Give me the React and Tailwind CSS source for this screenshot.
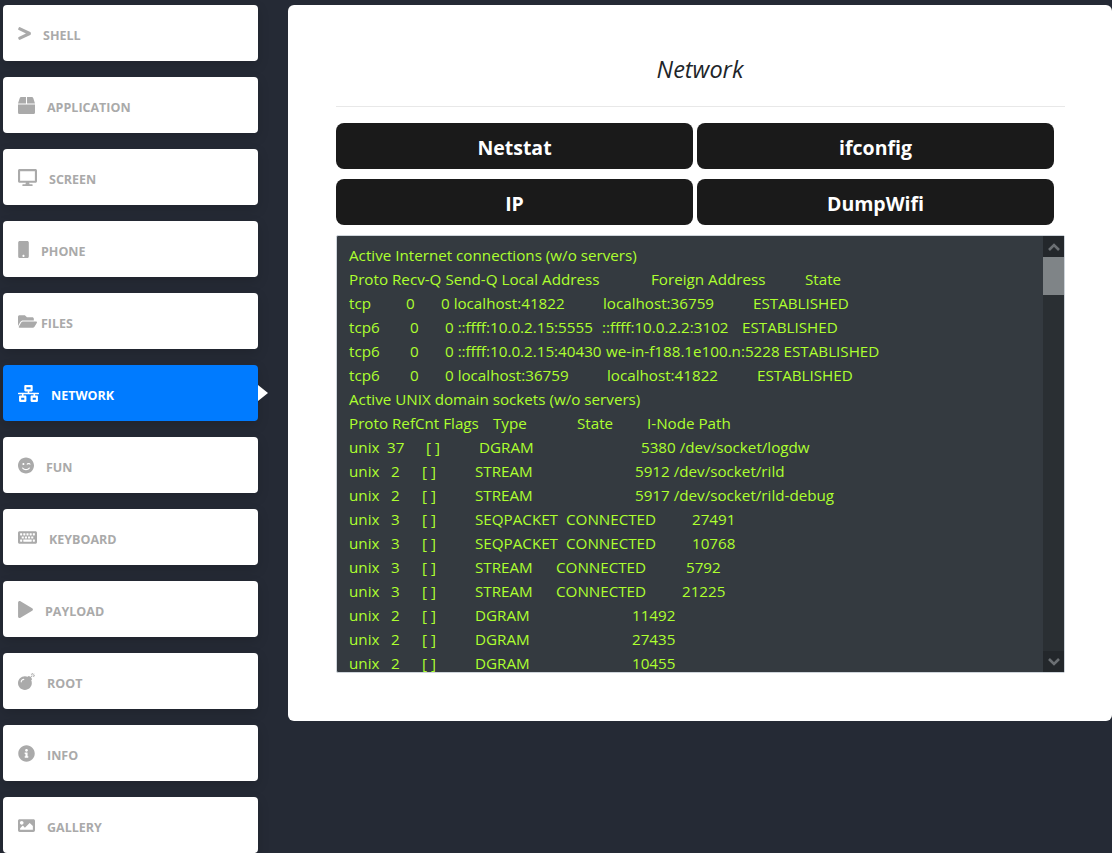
import React from 'react';
import {
  FaGreaterThan, FaBox, FaDesktop, FaMobile, FaFolderOpen, FaNetworkWired,
  FaSmileWink, FaKeyboard, FaPlay, FaBomb, FaInfoCircle, FaImage,
} from 'react-icons/fa';

const menu = [
  { label: 'Shell', icon: FaGreaterThan, width: 'w-[13px]!' },
  { label: 'Application', icon: FaBox, width: 'w-[17px]!' },
  { label: 'Screen', icon: FaDesktop, width: 'w-[19px]!' },
  { label: 'Phone', icon: FaMobile, width: 'w-[11px]!' },
  { label: 'Files', icon: FaFolderOpen, width: 'w-[19px]!', tight: true },
  { label: 'Network', icon: FaNetworkWired, width: 'w-[21px]!', active: true },
  { label: 'Fun', icon: FaSmileWink, width: 'w-[16px]!' },
  { label: 'Keyboard', icon: FaKeyboard, width: 'w-[19px]!' },
  { label: 'Payload', icon: FaPlay, width: 'w-[15px]!' },
  { label: 'Root', icon: FaBomb, width: 'w-[17px]!' },
  { label: 'Info', icon: FaInfoCircle, width: 'w-[17px]!' },
  { label: 'Gallery', icon: FaImage, width: 'w-[17px]!' },
];

// each token is [text, x offset inside the line], netstat output has no real columns here
const output = [
  [['Active Internet connections (w/o servers)', 0]],
  [['Proto Recv-Q Send-Q Local Address', 0], ['Foreign Address', 302], ['State', 456]],
  [['tcp', 0], ['0', 57], ['0 localhost:41822', 92], ['localhost:36759', 254], ['ESTABLISHED', 404]],
  [['tcp6', 0], ['0', 61], ['0 ::ffff:10.0.2.15:5555', 96], ['::ffff:10.0.2.2:3102', 253], ['ESTABLISHED', 393]],
  [['tcp6', 0], ['0', 61], ['0 ::ffff:10.0.2.15:40430', 96], ['we-in-f188.1e100.n:5228 ESTABLISHED', 257]],
  [['tcp6', 0], ['0', 61], ['0 localhost:36759', 96], ['localhost:41822', 258], ['ESTABLISHED', 408]],
  [['Active UNIX domain sockets (w/o servers)', 0]],
  [['Proto RefCnt Flags', 0], ['Type', 144], ['State', 228], ['I-Node Path', 298]],
  [['unix', 0], ['37', 38], ['[ ]', 77], ['DGRAM', 130], ['5380 /dev/socket/logdw', 292]],
  [['unix', 0], ['2', 42], ['[ ]', 73], ['STREAM', 126], ['5912 /dev/socket/rild', 286]],
  [['unix', 0], ['2', 42], ['[ ]', 73], ['STREAM', 126], ['5917 /dev/socket/rild-debug', 286]],
  [['unix', 0], ['3', 42], ['[ ]', 73], ['SEQPACKET', 126], ['CONNECTED', 217], ['27491', 343]],
  [['unix', 0], ['3', 42], ['[ ]', 73], ['SEQPACKET', 126], ['CONNECTED', 217], ['10768', 343]],
  [['unix', 0], ['3', 42], ['[ ]', 73], ['STREAM', 126], ['CONNECTED', 207], ['5792', 337]],
  [['unix', 0], ['3', 42], ['[ ]', 73], ['STREAM', 126], ['CONNECTED', 207], ['21225', 333]],
  [['unix', 0], ['2', 42], ['[ ]', 73], ['DGRAM', 126], ['11492', 283]],
  [['unix', 0], ['2', 42], ['[ ]', 73], ['DGRAM', 126], ['27435', 283]],
  [['unix', 0], ['2', 42], ['[ ]', 73], ['DGRAM', 126], ['10455', 283]],
];

const OutputLine = ({ tokens }) => (
  <div className="h-6 leading-6 whitespace-pre">
    {tokens.map(([text, x], i) => {
      const next = tokens[i + 1];
      return (
        <span key={i} className="inline-block" style={next ? { width: next[1] - x } : undefined}>
          {text}
        </span>
      );
    })}
  </div>
);

const MenuItem = ({ label, icon: Icon, width, tight, active }) => (
  <div
    className={`relative flex h-14 w-[255px] shrink-0 items-center rounded-[4px] pl-[15px] shadow-[0_4px_12px_rgba(0,0,0,0.15)] ${
      active ? 'bg-[#007bff] text-white' : 'bg-white text-[#aaaaaa]'
    }`}
  >
    <Icon className={`h-[17px]! shrink-0 ${width} ${tight ? 'mr-1' : 'mr-3'}`} />
    <span className="mt-[6px] text-[12.5px] font-bold uppercase">{label}</span>
    {active && (
      <span className="absolute top-[20px] left-full border-y-[8px] border-l-[10px] border-y-transparent border-l-white" />
    )}
  </div>
);

const Chevron = ({ d }) => (
  <svg viewBox="0 0 12 8" className="h-2 w-3" fill="none" stroke="#6b6f73" strokeWidth="2.6">
    <path d={d} />
  </svg>
);

export default function App() {
  return (
    <div className="flex h-[853px] items-start gap-[30px] overflow-hidden bg-[#252a35] pt-[5px] pl-[3px] font-['Open_Sans',sans-serif]">
      <div className="flex w-[255px] shrink-0 flex-col gap-4">
        {menu.map((item) => (
          <MenuItem key={item.label} {...item} />
        ))}
      </div>

      <div className="h-[716px] w-[824px] shrink-0 rounded-[6px] bg-white px-12">
        <h1 className="pt-[48px] pb-[20px] text-center text-[23.5px] leading-[33px] text-[#212529] italic">Network</h1>
        <hr className="w-[729px] border-[#e8e8e8]" />
        <div className="mt-4 flex flex-wrap gap-x-1 gap-y-[10px]">
          {['Netstat', 'ifconfig', 'IP', 'DumpWifi'].map((name) => (
            <button key={name} className="h-[46px] w-[357px] rounded-lg bg-[#1a1a1a] pt-1 text-[19.5px] font-bold text-white">
              {name}
            </button>
          ))}
        </div>
        <div className="mt-[10px] flex h-[438px] w-[729px] overflow-hidden rounded-[2px] border border-[#ced4da] bg-[#343a40]">
          <div className="min-w-0 flex-1 overflow-hidden pt-[7px] pl-3 text-[15.2px] text-[#adff2f]">
            {output.map((tokens, i) => (
              <OutputLine key={i} tokens={tokens} />
            ))}
          </div>
          <div className="flex w-[21px] shrink-0 flex-col bg-[#2a2f33]">
            <div className="flex h-[21px] items-center justify-center bg-[#23272b]">
              <Chevron d="M1 7l5-5 5 5" />
            </div>
            <div className="h-[38px] bg-[#7f8487]" />
            <div className="flex-1" />
            <div className="flex h-[21px] items-center justify-center bg-[#23272b]">
              <Chevron d="M1 1l5 5 5-5" />
            </div>
          </div>
        </div>
      </div>
    </div>
  );
}
